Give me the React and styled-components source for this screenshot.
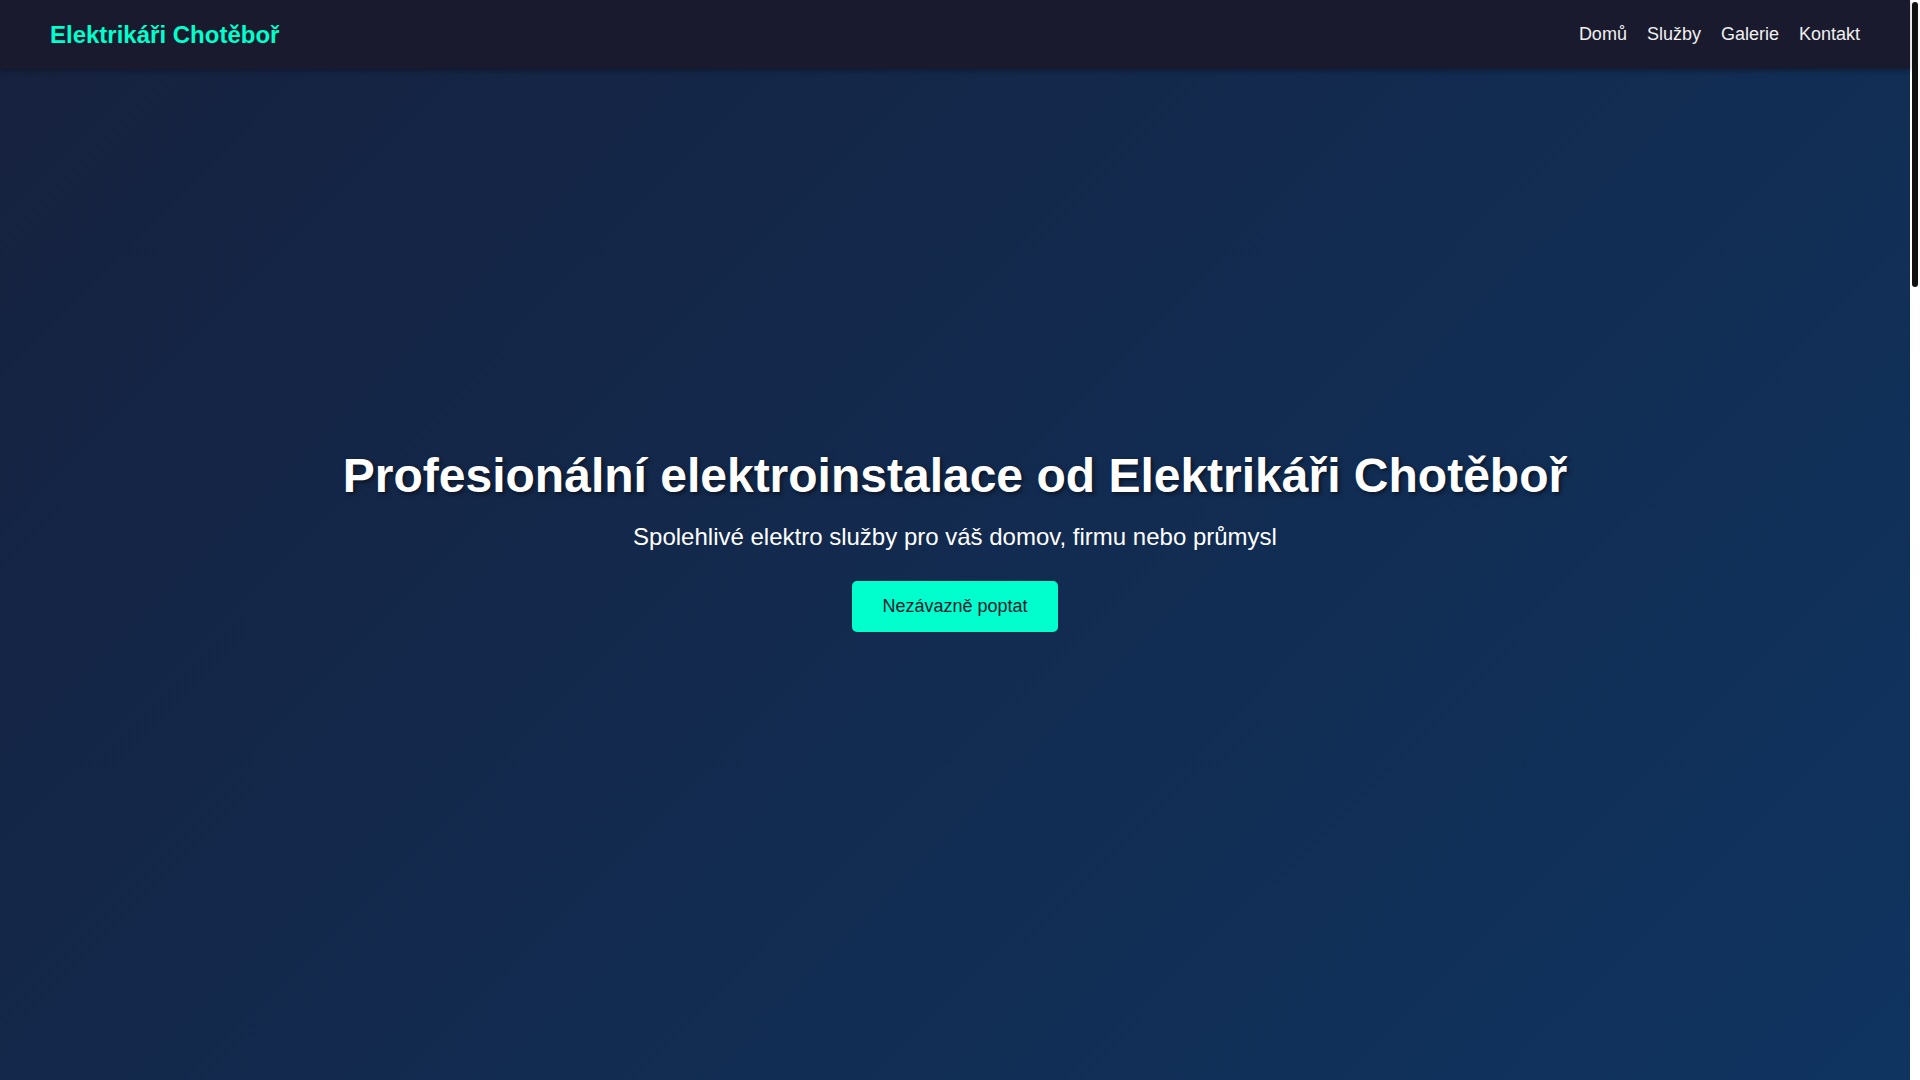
import styled, { createGlobalStyle } from "styled-components";

const GlobalStyle = createGlobalStyle`
    * {
        box-sizing: border-box;
    }
    body {
        margin: 0;
        font-family: "Liberation Sans", Arial, sans-serif;
        background-color: #1a1a2e;
        color: #ffffff;
    }
`

const Page = styled.div`
    display: flex;
    height: 100vh;
    overflow: hidden;
`
const Main = styled.main`
    position: relative;
    flex: 1;
`
// the page scrollbar as the reference shows it (white track, dark thumb)
const ScrollRail = styled.div`
    width: 10px;
    padding: 2px;
    background-color: #ffffff;
`
const ScrollThumb = styled.div`
    height: 285px;
    border-radius: 3px;
    background-color: #111111;
`

const Header = styled.header`
    position: absolute;
    top: 0;
    left: 0;
    right: 0;
    z-index: 10;
    height: 69px;
    padding: 0 50px;
    display: flex;
    align-items: center;
    justify-content: space-between;
    background-color: #1a1a2e;
    box-shadow: 0 2px 5px rgba(0, 0, 0, 0.3);
`
const Logo = styled.div`
    font-size: 24px;
    font-weight: 700;
    color: #00ffcc;
`
const Nav = styled.nav`
    display: flex;
    gap: 20px;
`
const NavLink = styled.a`
    font-size: 18px;
    color: #f0f0f0;
    text-decoration: none;
`

const Hero = styled.section`
    height: 100vh;
    display: flex;
    flex-direction: column;
    align-items: center;
    justify-content: center;
    text-align: center;
    padding: 0 20px;
    background: linear-gradient(135deg, #16213e 0%, #0f3460 100%);
`
const HeroTitle = styled.h1`
    margin: 0 0 20px;
    font-size: 48px;
    font-weight: 700;
    color: #ffffff;
    text-shadow: 2px 2px 4px rgba(0, 0, 0, 0.5);
`
const HeroText = styled.p`
    margin: 0 0 30px;
    font-size: 24px;
    color: #ffffff;
`
const CtaButton = styled.a`
    display: inline-block;
    padding: 15px 30px;
    font-size: 18px;
    line-height: 21px;
    color: #1a1a2e;
    background-color: #00ffcc;
    border-radius: 5px;
    text-decoration: none;
`

const navItems = [
    { id: 1, title: "Domů", href: "#domu" },
    { id: 2, title: "Služby", href: "#sluzby" },
    { id: 3, title: "Galerie", href: "#galerie" },
    { id: 4, title: "Kontakt", href: "#kontakt" },
]

const App = () => {
    return (
        <>
            <GlobalStyle />
            <Page>
                <Main>
                    <Header>
                        <Logo>Elektrikáři Chotěboř</Logo>
                        <Nav>
                            {navItems.map((item) => (
                                <NavLink key={item.id} href={item.href}>{item.title}</NavLink>
                            ))}
                        </Nav>
                    </Header>
                    <Hero id="domu">
                        <HeroTitle>Profesionální elektroinstalace od Elektrikáři Chotěboř</HeroTitle>
                        <HeroText>Spolehlivé elektro služby pro váš domov, firmu nebo průmysl</HeroText>
                        <CtaButton href="#kontakt">Nezávazně poptat</CtaButton>
                    </Hero>
                </Main>
                <ScrollRail aria-hidden="true">
                    <ScrollThumb />
                </ScrollRail>
            </Page>
        </>
    )
}

export default App;
